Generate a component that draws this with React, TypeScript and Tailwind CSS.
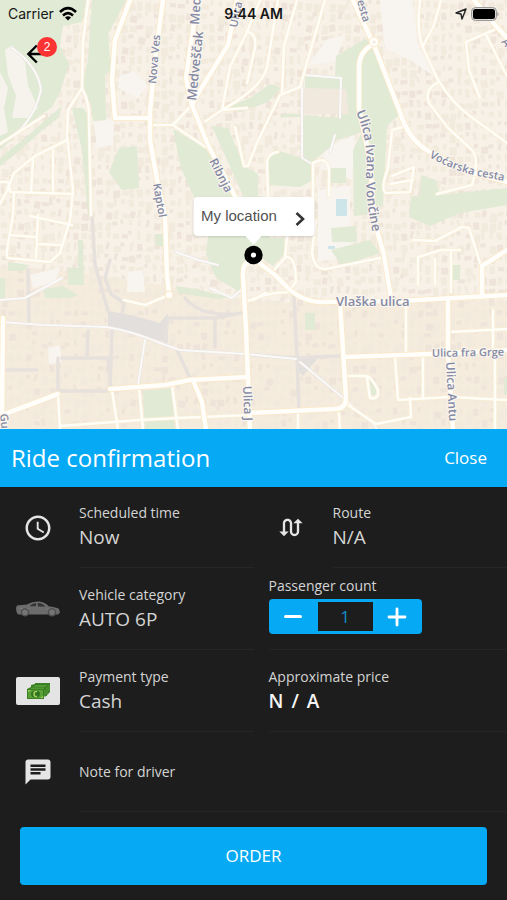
import { useState } from "react";
import type { ReactNode } from "react";
import { MdAccessTime, MdArrowBack, MdChat, MdSwapCalls } from "react-icons/md";

const parks = [
  "M0 0H86L82 22L63 26L60 46L69 64L60 92L52 107L28 124L0 150Z",
  "M92 0H126L108 34L111 70L105 75L106 120L93 121L91 104L81 92L88 60Z",
  "M0 158L30 134L48 118L62 106L58 118L40 132L18 152L0 166Z",
  "M173 129L206 149L226 180L238 197L262 196L270 238L246 262L240 292L216 278L206 254L208 236L194 197L181 168Z",
  "M212 126L228 128L244 166L258 174V197H244L236 180Z",
  "M119 148L137 146L139 188L122 190L109 172Z",
  "M83 108Q88 112 88 122L91 215H88L82 150L72 108Z",
  "M262 238H284V254L273 266L254 252Z",
  "M176 286L196 289L212 293L230 297L217 299L178 293Z",
  "M44 289L62 286L78 295L70 298H45Z",
  "M78 240H83L84 285H68V268H78Z",
  "M143 391L171 388L175 430H145Z",
  "M0 278H5V298H0Z M8 262L29 265L24 271H8Z M155 234H163V246H156Z",
  "M336 56L365 39L374 46L400 114L387 126L383 205L372 214L354 216L353 150L362 132L335 141L341 90H305V77H335Z",
  "M301 115L341 118L332 146L314 160L313 180L300 187L268 185V157L280 151L301 158Z",
  "M281 114H301V117H281Z M331 168H346V183H331Z",
  "M411 197L420 195L421 175L436 180L440 195L507 188V205L460 213L430 226L409 217Z",
  "M331 228L356 226L357 242H332Z M331 250L370 240L380 253L342 266Z",
  "M453 265H460V280H453Z M305 313H315V330H305Z M370 378L375 380L377 395H370Z M504 378H507V395H504Z",
  "M226 108L250 98L270 84L281 88L268 102L240 112Z",
];

const mainRoads = [
  "M163 0L155 60L150 112L150 140L158 185L165 215L167 275L169 293",
  "M130 0L115 40L112 80L115 118L150 118",
  "M197 0L193 30L186 78L192 105L208 145L236 198",
  "M192 105L199 92L228 45L237 0",
  "M248 262Q243 264 243 275L246 330L248 378L250 430",
  "M258 262L275 275L290 290Q305 302 320 302L400 301L507 295",
  "M372 45Q359 52 359 68L359 108L370 160L374 220L384 255L391 298",
  "M353 0L374 45L400 112Q408 140 430 152L470 172L507 182",
  "M340 302L346 398Q346 409 334 409L250 413",
  "M345 357L430 354L507 350",
  "M448 300L448 352L453 430",
  "M482 297V266L507 250",
  "M110 389L165 385L190 380L248 377",
  "M3 318L2 415L58 394",
  "M474 0L495 25L507 38",
  "M193 380L202 402L206 430",
];

const sideRoads = [
  "M88 0L83 42L82 88L68 110L67 136L73 190L70 220L60 253L50 262L8 258Q6 257 7 250L13 215L14 192",
  "M82 88Q90 104 89 118L91 215",
  "M67 140L35 156L14 173L7 191L0 204",
  "M0 182H8L10 192L73 194M53 150V194M33 160L31 192",
  "M38 215L36 258M10 235L36 237M30 216L72 225M38 244L60 245",
  "M150 125H173L190 107M173 125L207 148M206 121L222 110L247 108",
  "M58 394L60 430M60 426L140 420L178 418M112 390L118 430M139 387L143 430M172 385L178 430M178 418L250 415",
  "M169 295L145 305L124 300",
  "M243 303Q267 292 290 292M253 300L266 293",
  "M325 0L300 87L280 95L257 143L248 166H244L235 127",
  "M297 0L284 46L282 92M278 0L267 67Q262 88 222 110",
  "M260 0L247 32L230 67L222 110M246 32Q257 32 255 48L247 83",
  "M420 0Q416 30 423 48L438 80Q453 104 470 116L507 143",
  "M437 83Q424 90 429 103L448 128L472 150Q480 160 472 185L437 194",
  "M496 29L466 42L469 70L480 98M486 35L507 76M441 0L434 25L423 46",
  "M406 126L392 130L388 168Q380 190 386 193L410 192L414 167L392 176M390 184L413 180",
  "M268 196L267 162Q268 153 278 152",
  "M313 163Q327 155 329 170V196M313 163V235",
  "M316 220L312 252Q314 270 326 269L380 258",
  "M287 237L285 258L273 271M286 257Q296 256 296 282L289 291",
  "M406 301V352M395 357L398 400L450 397L507 400M423 356V398M493 310V350M450 332L507 329",
  "M413 240L435 241L462 227L469 228L480 263M418 285V257L441 250L460 250M435 284V259M451 252V292",
  "M346 376H367Q372 378 378 390Q379 400 370 398L367 378M410 398L411 417L376 424L345 403",
  "M340 430L339 413M298 411V430M495 352V430",
  "M0 144L44 116",
];

const greyStreets = [
  "M110 260L105 278L111 294L124 303L122 313M92 215L95 265L108 311",
  "M165 343L168 318H215L247 312M215 318V347M185 298Q200 316 232 314",
  "M62 358H108L111 388M88 331L87 358M112 330L110 390M60 391H108M58 358V390",
  "M177 350L190 378M294 294L297 358L299 411M253 355L295 358L340 356",
  "M0 370H37M28 270L29 322",
];

const paths = [
  "M0 322L45 325L107 327Q135 332 160 343L180 350L246 354L296 359",
  "M300 362L348 402L374 425L378 430",
  "M12 48Q38 66 41 90Q36 112 22 128L0 145",
  "M210 288L232 298L242 289M145 340L138 385",
  "M305 75L341 78L340 118M302 78V158L312 164M335 135L330 152",
  "M176 252L198 260L218 265M0 300L25 298L62 278",
];

// small deterministic blocks that stand for houses between the streets
const houses = Array.from({ length: 2600 }, (_, i) => {
  const col = i % 65;
  const row = Math.floor(i / 65);
  const seed = (col * 73 + row * 151 + col * row * 17) % 97;
  return {
    x: col * 8 + (seed % 4),
    y: row * 11 + (seed % 5),
    w: 3 + (seed % 5),
    h: 4 + (seed % 6),
    turn: (seed % 4) * 8 - 12,
    dark: seed % 3 === 0,
  };
});

function StreetMap() {
  return (
    <svg
      className="absolute inset-0 h-full w-full"
      viewBox="0 0 507 429"
      preserveAspectRatio="xMidYMin slice"
      fill="none"
      strokeLinecap="round"
      strokeLinejoin="round"
    >
      <rect width="507" height="430" fill="#f7f1e7" />
      <path d="M0 265L100 275L250 300L330 305L507 300V430H0Z" fill="#f5ecde" />
      {houses.map((b, i) => (
        <rect
          key={i}
          x={b.x}
          y={b.y}
          width={b.w}
          height={b.h}
          fill={b.dark ? "#efe4d9" : "#f3eade"}
          transform={`rotate(${b.turn} ${b.x} ${b.y})`}
        />
      ))}
      {/* open squares */}
      <path
        d="M120 75L135 72L148 85L138 98L118 88ZM94 122L113 120V145L97 148ZM128 272L143 270L145 292L127 292ZM48 348L60 345L62 362L49 364ZM380 0H412L418 45L440 80L410 60L385 48ZM308 65L326 40L345 35L335 62ZM318 190L350 186V255L318 262ZM30 275L60 268L55 282L33 288ZM326 148L355 135L352 180L320 168Z"
        fill="#f8f5f0"
      />
      {parks.map((d) => (
        <path key={d} d={d} fill="#e0ead4" />
      ))}
      <path d="M5 50L12 45L25 62L28 85L38 108L28 118L12 118L16 96L8 75Z M0 72L8 88L4 108L8 132L0 136Z" fill="#f6f3ec" />
      <path d="M304 88L346 89L349 114H303Z" fill="#f1e8de" />
      <path d="M336 199H347V216H336ZM328 246H335V249H328Z" fill="#cde5e8" />
      <path d="M108 311L135 316L160 323L168 313V343L150 338L108 328Z" fill="#e3dfdc" />
      <path d="M298 358H318L303 376L297 370Z" fill="#e3dfdc" />

      {greyStreets.map((d) => (
        <path key={d} d={d} stroke="#e6e1dc" strokeWidth="3.5" />
      ))}
      {paths.map((d) => (
        <g key={d}>
          <path d={d} stroke="#e8e4e0" strokeWidth="3" />
          <path d={d} stroke="#fbfaf8" strokeWidth="2" />
        </g>
      ))}
      {sideRoads.map((d) => (
        <path key={d} d={d} stroke="#f9ecd0" strokeWidth="3.8" />
      ))}
      {sideRoads.map((d) => (
        <path key={d} d={d} stroke="#fffdf8" strokeWidth="2.6" />
      ))}
      {mainRoads.map((d) => (
        <path key={d} d={d} stroke="#fbe8c4" strokeWidth="6" />
      ))}
      {mainRoads.map((d) => (
        <path key={d} d={d} stroke="#fffefb" strokeWidth="4.6" />
      ))}
      <circle cx="169" cy="295" r="4" fill="#fffefb" stroke="#fbe8c4" />
      <circle cx="374" cy="42" r="5" fill="#fffefb" stroke="#fbe8c4" />
      <circle cx="374" cy="42" r="1.6" fill="#f5ecde" />

      <defs>
        <path id="ribnja" d="M209 161L232 206L250 245" />
        <path id="kaptol" d="M153 184L162 235" />
        <path id="voncine" d="M356 112Q369 140 366 175Q365 205 378 255" />
        <path id="vocarska" d="M429 157Q450 169 473 175L520 184" />
      </defs>
      <g
        fill="#858aa5"
        stroke="#fbf7f0"
        strokeWidth="2"
        paintOrder="stroke"
        fontFamily="'Open Sans', sans-serif"
        fontWeight="600"
        fontSize="13"
      >
        <text transform="translate(196 101) rotate(-84)">Medveščak</text>
        <text transform="translate(199 25) rotate(-86)">Med</text>
        <text fontSize="12"><textPath href="#ribnja">Ribnja</textPath></text>
        <text fontSize="11"><textPath href="#kaptol">Kaptol</textPath></text>
        <text><textPath href="#voncine">Ulica Ivana Vončine</textPath></text>
        <text fontSize="11"><textPath href="#vocarska">Voćarska cesta</textPath></text>
        <text fontSize="11" transform="translate(357 1) rotate(74)">esta</text>
        <text fontSize="11" transform="translate(156 84) rotate(-85)">Nova Ves</text>
        <text fontSize="11" transform="translate(237 28) rotate(-78)">Ulica</text>
        <text x="336" y="306">Vlaška ulica</text>
        <text x="432" y="357" fontSize="11" transform="rotate(-1 432 357)">Ulica fra Grge</text>
        <text fontSize="12" transform="translate(243 386) rotate(88)">Ulica J</text>
        <text fontSize="12" transform="translate(446 362) rotate(87)">Ulica Antu</text>
        <text fontSize="11" transform="translate(0 414) rotate(84)">Gu</text>
        <text fontSize="11" transform="translate(501 42) rotate(50)">A</text>
      </g>
    </svg>
  );
}

function StatusBar() {
  return (
    <div className="relative grid h-7 grid-cols-3 items-center px-2 font-['Inter',sans-serif] text-sm text-neutral-900">
      <div className="flex items-center gap-1">
        <span>Carrier</span>
        <svg className="h-4 w-5" viewBox="0 0 20 16" fill="none" stroke="black" strokeWidth="2.6">
          <path d="M2 6Q10 -1.6 18 6M5 9.4Q10 5 15 9.4" />
          <path d="M7 11.5Q10 9 13 11.5L10 14.5Z" fill="black" stroke="none" />
        </svg>
      </div>
      <span className="text-center font-semibold">9:44 AM</span>
      <div className="flex items-center justify-end gap-1">
        <svg className="size-3" viewBox="0 0 12 12" fill="none" stroke="#222" strokeWidth="1.4">
          <path d="M11 1L7 11L6 6L1 5Z" strokeLinejoin="round" />
        </svg>
        <svg className="h-3.5 w-7" viewBox="0 0 28 14">
          <rect x="0.5" y="0.5" width="25" height="13" rx="4" fill="#ccc" fillOpacity="0.6" stroke="#999" />
          <rect x="2" y="2" width="22" height="10" rx="2.5" fill="black" />
          <path d="M26.5 4.5Q28.5 7 26.5 9.5Z" fill="#888" />
        </svg>
      </div>
    </div>
  );
}

function CarIcon() {
  return (
    <svg className="h-4 w-11" viewBox="0 0 44 16">
      <path
        d="M0 7L1 4.5L11 3.5Q16 0.5 23 0.5Q29 1 33 5.5Q40 6 43 8L44 11.5L42 13.5H2L0.5 11Z"
        fill="#6c6c6c"
      />
      <path d="M14 4.6Q17 2 20 2V5.2H14.5ZM21.5 2Q26 2 29.5 5.4H22Z" fill="#333" />
      <path d="M4 7.5H13M30 8.2H40" stroke="#7c7c7c" />
      {[9, 36].map((cx) => (
        <g key={cx}>
          <circle cx={cx} cy="11.2" r="4.2" fill="#505050" />
          <circle cx={cx} cy="11.2" r="2.8" fill="#757575" />
        </g>
      ))}
    </svg>
  );
}

function CashIcon() {
  return (
    <svg className="h-7 w-11" viewBox="0 0 44 28">
      <rect width="44" height="28" rx="2" fill="#e4e4e4" />
      <path d="M19 6H34V15L31 18V19H28V22H11V12L15 10V8L19 7Z" fill="#397f24" />
      <path d="M20 8H32L29 10H17ZM16 10.5H28V12H14Z" fill="#549a34" />
      <path d="M29 13V20M31 10V17M33 8V14" stroke="#5b9c36" />
      <rect x="12" y="13" width="15" height="8" fill="#5ba137" />
      <ellipse cx="19.5" cy="17" rx="4.5" ry="3.6" fill="#2f7420" />
      <path d="M21 14.5Q18 14 18 17T21 19.5" stroke="#a7cf5d" strokeWidth="1.6" fill="none" />
      <path d="M12 13H15L12 15ZM27 21H24L27 19Z" fill="#a7cf5d" />
    </svg>
  );
}

function Row({ icon, label, value }: { icon: ReactNode; label: string; value?: string }) {
  return (
    <div className="flex h-full items-stretch">
      <div className="flex w-[79px] shrink-0 items-center pr-1 text-neutral-200">
        <span className="flex w-[75px] justify-center">{icon}</span>
      </div>
      <div className="flex flex-1 flex-col justify-center border-b border-neutral-800">
        <span className="text-sm/6 text-neutral-300">{label}</span>
        {value && <span className="pb-1 text-[19px]/6 text-neutral-300">{value}</span>}
      </div>
    </div>
  );
}

function PassengerCount() {
  const [count, setCount] = useState(1);
  return (
    <div className="ml-[15px] flex h-full flex-col items-start border-b border-neutral-800 pt-1.5">
      <label htmlFor="passengers" className="text-sm/6 text-neutral-300">
        Passenger count
      </label>
      <div className="mt-px flex h-[35px] w-[153px] items-stretch rounded bg-[#05a9f4] py-[3px]">
        <button
          aria-label="Fewer passengers"
          className="flex flex-1 items-center justify-center"
          onClick={() => setCount(Math.max(1, count - 1))}
        >
          <span className="h-[3px] w-[18px] rounded bg-white" />
        </button>
        <input
          id="passengers"
          value={count}
          readOnly
          className="w-[55px] bg-[#1d1d1d] text-center text-[17px] text-[#168fc9] outline-none"
        />
        <button
          aria-label="More passengers"
          className="flex flex-1 items-center justify-center"
          onClick={() => setCount(count + 1)}
        >
          <svg className="size-5" viewBox="0 0 20 20" stroke="white" strokeWidth="2.8" strokeLinecap="round">
            <path d="M2 10H18M10 2V18" />
          </svg>
        </button>
      </div>
    </div>
  );
}

export default function App() {
  return (
    <main className="flex min-h-screen flex-col bg-[#1d1d1d] font-['Open_Sans',sans-serif]">
      {/* Map */}
      <section className="relative min-h-80 flex-1 overflow-hidden">
        <StreetMap />
        <StatusBar />
        <button aria-label="Back" className="absolute top-10 left-[22px] text-black">
          <MdArrowBack size={28} />
          <span className="absolute -top-[3px] left-[15px] flex size-5 items-center justify-center rounded-full bg-[#fb3433] font-['Liberation_Sans',sans-serif] text-xs text-white">
            2
          </span>
        </button>
        <div className="absolute top-[197px] left-1/2 flex -translate-x-1/2 flex-col items-center">
          <button className="flex h-[39px] w-[121px] items-center justify-between rounded bg-white px-2 font-['Liberation_Sans',sans-serif] text-[15px] text-neutral-600 shadow">
            My location
            <svg className="mt-1 h-4 w-3" viewBox="0 0 12 16" fill="none" stroke="#333" strokeWidth="2.6">
              <path d="M2 2L8.5 8L2 14" />
            </svg>
          </button>
          <svg className="h-[9px] w-4" viewBox="0 0 16 9">
            <path d="M0 0H16L8 9Z" fill="white" />
          </svg>
          <svg className="size-5" viewBox="0 0 20 20">
            <circle cx="10" cy="10" r="9.2" fill="black" />
            <circle cx="10" cy="10" r="2.6" fill="white" />
          </svg>
        </div>
      </section>

      {/* Confirmation sheet */}
      <section>
        <header className="flex h-[58px] items-center justify-between bg-[#05a9f4] pr-5 pl-[11px] text-white">
          <h1 className="text-2xl">Ride confirmation</h1>
          <button className="text-[17px]">Close</button>
        </header>

        <div className="grid grid-cols-2 grid-rows-[81px_82px_82px_80px]">
          <Row icon={<MdAccessTime size={30} />} label="Scheduled time" value="Now" />
          <Row icon={<MdSwapCalls size={28} />} label="Route" value="N/A" />
          <Row icon={<CarIcon />} label="Vehicle category" value="AUTO 6P" />
          <PassengerCount />
          <Row icon={<CashIcon />} label="Payment type" value="Cash" />
          <div className="ml-[15px] flex flex-col justify-center border-b border-neutral-800">
            <span className="text-sm/6 text-neutral-300">Approximate price</span>
            <span className="flex gap-2 pb-1 text-[19px]/6 font-semibold text-neutral-100">
              <span>N</span>
              <span>/</span>
              <span>A</span>
            </span>
          </div>
          <div className="col-span-2">
            <Row icon={<MdChat size={30} />} label="Note for driver" />
          </div>
        </div>

        <div className="px-5 py-[15px]">
          <button className="h-[58px] w-full rounded bg-[#05a9f4] text-[17px] text-white">ORDER</button>
        </div>
      </section>
    </main>
  );
}
